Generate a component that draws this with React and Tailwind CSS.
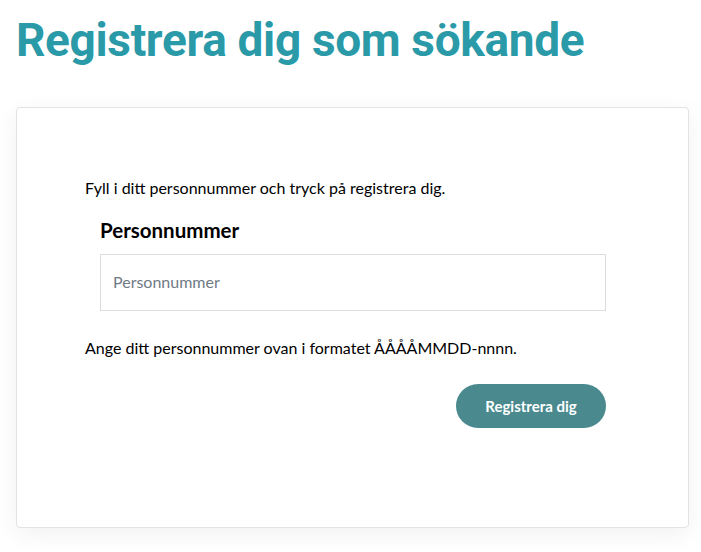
export default function App() {
  return (
    <div className="bg-white">
      <div className="pl-4 pt-[12px] h-[107px]">
        <h1
          className="text-[#2a9aa8] text-[46px] leading-[56px] font-bold tracking-[-0.35px]"
          style={{ fontFamily: 'Roboto, "Liberation Sans", sans-serif' }}
        >
          Registrera dig som sökande
        </h1>
      </div>
      <div className="pl-4 pr-3 pb-6">
        <div
          className="border border-[#e3e3e3] rounded-[4px] bg-white shadow-[0_6px_24px_rgba(0,0,0,0.06)] h-[421px] pt-[68px] pl-[68px] pr-[82px]"
          style={{ fontFamily: 'Lato, "Liberation Sans", sans-serif' }}
        >
          <p className="text-[16px] leading-[24px] text-black">
            Fyll i ditt personnummer och tryck på registrera dig.
          </p>
          <div className="pl-[15px] mt-[17px]">
            <label className="block text-[20.5px] leading-[26px] font-bold text-black">Personnummer</label>
            <input
              className="mt-[11px] w-full h-[57px] border border-[#dcdcdc] px-3 pb-[3px] text-[16px] text-black placeholder:text-[#707a85] outline-none"
              placeholder="Personnummer"
            />
          </div>
          <p className="mt-[25px] text-[16px] leading-[24px] text-black">
            Ange ditt personnummer ovan i formatet ÅÅÅÅMMDD-nnnn.
          </p>
          <div className="flex justify-end mt-[24px]">
            <button className="w-[150px] h-[44px] rounded-full bg-[#4a8a8f] text-white text-[15px] font-bold">
              Registrera dig
            </button>
          </div>
        </div>
      </div>
    </div>
  );
}
